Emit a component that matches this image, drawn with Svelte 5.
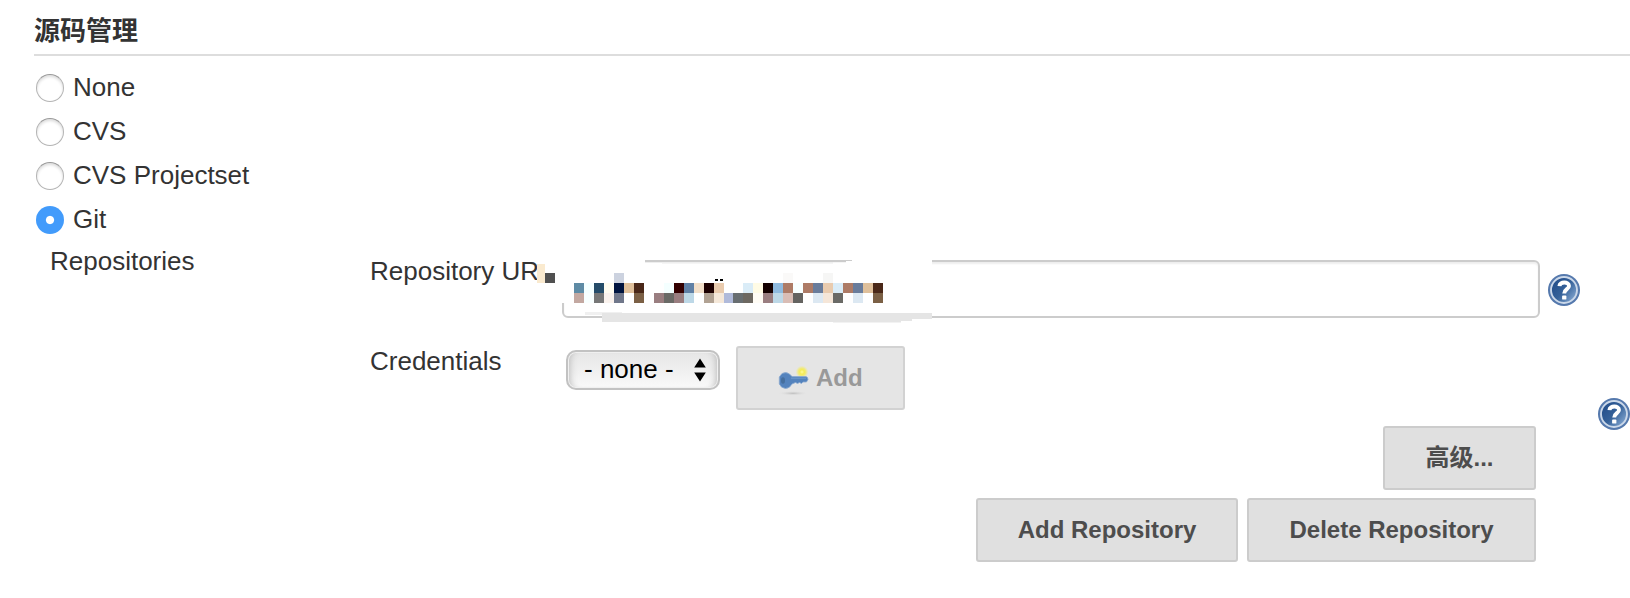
<script>
  let scm = $state('Git');
  const options = ['None', 'CVS', 'CVS Projectset', 'Git'];

  // Mosaic cells over the repository address: [x, colour], 10px grid
  const rows = [
    { y: 23, cells: [[52, '#ccd2df'], [221, '#faf9f8'], [261, '#f6f6f5']] },
    {
      y: 33,
      cells: [
        [12, '#5e8ba5'], [22, '#f4ffff'], [32, '#254c69'], [42, '#fffcf0'], [52, '#00143f'], [62, '#dfc09b'],
        [72, '#4a2818'], [102, '#f4ffff'], [112, '#330000'], [122, '#6080a5'], [132, '#f2dfc9'], [142, '#1c0000'],
        [152, '#e9cbae'], [181, '#daecf7'], [191, '#fffbe5'], [201, '#140000'], [211, '#8fbade'], [221, '#ad7b66'],
        [231, '#f8ffff'], [241, '#ad7b66'], [251, '#697c9b'], [261, '#e9cbae'], [271, '#daecf7'], [281, '#ad7b66'],
        [291, '#697c9b'], [301, '#dfc09b'], [311, '#4a2818']
      ]
    },
    {
      y: 43,
      cells: [
        [12, '#c3a8a1'], [22, '#f8ffff'], [32, '#777777'], [42, '#faf2ed'], [52, '#70778a'], [72, '#7b6045'],
        [92, '#9a7e80'], [102, '#6a6a66'], [112, '#9a7e80'], [122, '#bdd8e7'], [142, '#b1a293'], [152, '#f5e8d9'],
        [162, '#b0bada'], [171, '#686e71'], [181, '#6d6861'], [191, '#fffcf5'], [201, '#9a7e80'], [211, '#bdd8e7'],
        [221, '#d9bdb5'], [231, '#646360'], [251, '#dce8f2'], [261, '#f5e6d8'], [271, '#6a6a66'], [291, '#dce8f2'],
        [311, '#7b6045']
      ]
    }
  ];
</script>

{#snippet help()}
  <svg class="help" viewBox="0 0 32 32" width="32" height="32" role="img" aria-label="Help">
    <defs>
      <linearGradient id="helpFill" x1="0" y1="0.1" x2="1" y2="0.9">
        <stop offset="0" stop-color="#1f4a88" />
        <stop offset="0.5" stop-color="#356199" />
        <stop offset="1" stop-color="#8eb0d8" />
      </linearGradient>
    </defs>
    <circle cx="16" cy="16" r="16" fill="#5579ad" />
    <circle cx="16" cy="16" r="13" fill="url(#helpFill)" stroke="#cbd8e9" stroke-width="1.9" />
    <path d="M11.4 12.2C11.6 7.4 21 7.2 21 12C21 15.2 16.2 15.2 16.2 19.4" fill="none" stroke="#fff" stroke-width="3.9" />
    <rect x="14.1" y="21.6" width="4.3" height="4" rx="0.9" fill="#fff" />
  </svg>
{/snippet}

<main>
  <h2>源码管理</h2>

  <div class="radios">
    {#each options as option}
      <label>
        <input type="radio" name="scm" value={option} bind:group={scm} />
        <span>{option}</span>
      </label>
    {/each}
  </div>

  <section>
    <div class="title">Repositories</div>
    <div class="repo">
      <div class="row">
        <div class="name">Repository URL</div>
        <div class="field">
          <input class="url" type="text" aria-label="Repository address" />
          <svg class="mosaic" width="420" height="74" viewBox="-30 0 420 74" shape-rendering="crispEdges" aria-hidden="true">
            <path d="M-25 10H83V13H284V11H290V9H370V68H23V53H-25Z" fill="#fff" />
            <path d="M23 66H40V68H23Z" fill="#ccc" />
            <path d="M83 10H290V11H284V12H83Z" fill="#ccc" />
            <path d="M100 13H284V12H271V14H100Z" fill="#f5f5f5" />
            <rect x="-25" y="14" width="8" height="19" fill="#faeacf" />
            <rect x="-17" y="23" width="10" height="10" fill="#505050" />
            {#each rows as row}
              {#each row.cells as cell}
                <rect x={cell[0]} y={row.y} width="10" height="10" fill={cell[1]} />
              {/each}
            {/each}
            <rect x="153" y="29" width="3" height="2" fill="#000" />
            <rect x="158" y="29" width="3" height="2" fill="#000" />
            <path d="M23 62H60V65H23Z" fill="#f0f0f0" />
            <path d="M40 63H370V69H350V71H339V72H40Z" fill="#e5e5e5" />
            <path d="M271 72H339V73H271Z" fill="#f2f2f2" />
          </svg>
        </div>
        {@render help()}
      </div>

      <div class="row cred">
        <div class="name">Credentials</div>
        <button class="select">
          <span>- none -</span>
          <svg width="12" height="24" viewBox="0 0 12 24"><path d="M6 0.5L11.8 9.6H.2ZM6 23.5L11.8 14.4H.2Z" /></svg>
        </button>
        <button class="btn add" disabled>
          <svg width="32" height="32" viewBox="0 0 32 32" aria-hidden="true">
            <defs>
              <radialGradient id="glow">
                <stop offset="0" stop-color="#fffa9a" />
                <stop offset="0.35" stop-color="#f5ec55" />
                <stop offset="0.6" stop-color="#f1ea75" stop-opacity="0.9" />
                <stop offset="1" stop-color="#eeeaa0" stop-opacity="0" />
              </radialGradient>
              <radialGradient id="shade">
                <stop offset="0" stop-color="#bdbdbd" />
                <stop offset="1" stop-color="#e4e4e4" stop-opacity="0" />
              </radialGradient>
            </defs>
            <ellipse cx="16" cy="29.3" rx="15" ry="2.4" fill="url(#shade)" />
            <circle cx="25" cy="8" r="6.5" fill="url(#glow)" />
            <path d="M5 9.5Q9 7.5 12.5 10L15 12.5H29Q31 13 31 15.5L29.5 18H26L24.5 19.5L22.5 18.5L20.5 19.5L18.5 18.5L15 20Q12.5 24.5 8.5 24.5Q4 24 2.3 20V13Z" fill="#5483bd" stroke="#8dabd0" stroke-width="0.8" />
            <path d="M14 14.2H29" stroke="#6b97ca" stroke-width="1.3" />
            <ellipse cx="6" cy="16.5" rx="2" ry="3.2" fill="#466f9e" />
          </svg>
          Add
        </button>
      </div>

      <div class="actions advanced"><button class="btn">高级...</button></div>
      <div class="actions">
        <button class="btn addrepo">Add Repository</button>
        <button class="btn delete">Delete Repository</button>
      </div>
    </div>
    <div class="side">{@render help()}</div>
  </section>
</main>

<style>
  :global(body) { margin: 0; background: #fff; overflow: hidden; }
  main {
    box-sizing: border-box;
    width: 1630px;
    height: 598px;
    padding-left: 34px;
    font: 26px/30px "Liberation Sans", "Noto Sans CJK SC", sans-serif;
    color: #333;
    background: #fff;
  }
  h2 {
    box-sizing: border-box;
    height: 56px;
    margin: 0;
    padding-top: 11px;
    border-bottom: 2px solid #ddd;
    font-size: 26px;
    line-height: 40px;
    font-weight: 700;
  }
  .radios { padding-top: 9px; }
  label { display: flex; align-items: center; height: 44px; line-height: 44px; }
  label input {
    appearance: none;
    box-sizing: border-box;
    width: 28px;
    height: 28px;
    margin: 2px 9px 0 2px;
    border: 1px solid #b4b4b4;
    border-top-color: #999;
    border-radius: 50%;
    background: #fff;
    box-shadow: inset 0 2px 3px #ddd;
  }
  label input:checked {
    border: 0;
    background: radial-gradient(circle, #fff 3.6px, #429bfb 4.6px);
    box-shadow: none;
  }
  section { display: flex; align-items: flex-start; }
  .title { box-sizing: border-box; width: 336px; padding: 5px 0 0 16px; }
  .repo { width: 1228px; padding-top: 15px; flex: none; }
  .row { display: flex; align-items: flex-start; }
  .name { width: 192px; flex: none; white-space: nowrap; }
  .field { position: relative; width: 978px; height: 58px; margin-top: 4px; }
  .url {
    display: block;
    box-sizing: border-box;
    width: 978px;
    height: 58px;
    border: 2px solid #ccc;
    border-radius: 6px;
    background: #fff;
    box-shadow: inset 0 2px 2px #eee;
    outline: none;
  }
  .mosaic { position: absolute; left: -30px; top: -10px; }
  .row .help { margin: 18px 0 0 8px; }
  .help { display: block; flex: none; }
  .cred { margin-top: 28px; }
  button { font-family: inherit; margin: 0; }
  .select {
    display: flex;
    align-items: center;
    justify-content: space-between;
    box-sizing: border-box;
    width: 154px;
    height: 40px;
    margin: 4px 16px 0 4px;
    padding: 0 12px 0 16px;
    border: 2px solid #c2c2c2;
    border-radius: 10px;
    background: linear-gradient(#e6e6e6, #f9f9f9);
    box-shadow: inset 0 0 0 1px #f0f0f0, inset 8px 0 7px -6px #bbb, inset -8px 0 7px -6px #bbb;
    font-size: 26px;
    line-height: 36px;
    color: #000;
  }
  .select span { position: relative; top: -1px; }
  .btn {
    box-sizing: border-box;
    width: 153px;
    height: 64px;
    padding: 0;
    border: 2px solid #ccc;
    border-radius: 3px;
    background: #e0e0e0;
    color: #4d4d4d;
    font: bold 24px/58px "Liberation Sans", "Noto Sans CJK SC", sans-serif;
  }
  .add {
    display: flex;
    align-items: center;
    width: 169px;
    padding-left: 39px;
    gap: 7px;
    background: #e5e5e5;
    border-color: #d2d2d2;
    color: #999;
  }
  .add svg { flex: none; margin-top: 4px; }
  .actions { display: flex; justify-content: flex-end; width: 1166px; gap: 9px; margin-top: 8px; }
  .advanced { margin-top: 16px; }
  .addrepo { width: 262px; }
  .delete { width: 289px; }
  .side { padding-top: 157px; }
</style>
